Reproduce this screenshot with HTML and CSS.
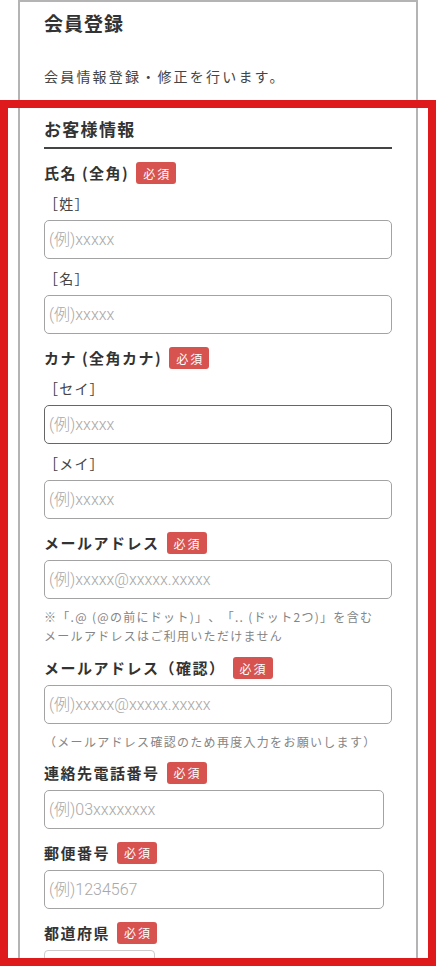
FILE: index.html
```html
<!DOCTYPE html>
<html lang="ja">
<head>
<meta charset="utf-8">
<title>会員登録</title>
<link rel="stylesheet" href="styles.css">
</head>
<body>
<div class="page">
  <h1 class="title">会員登録</h1>
  <p class="intro">会員情報登録・修正を行います。</p>

  <h2 class="section">お客様情報</h2>

  <div class="field">
    <div class="label"><span class="label-text">氏名 (全角)</span><span class="req">必須</span></div>
    <div class="sub">［姓］</div>
    <input class="input" type="text" placeholder="(例)xxxxx">
    <div class="sub">［名］</div>
    <input class="input" type="text" placeholder="(例)xxxxx">
  </div>

  <div class="field">
    <div class="label"><span class="label-text">カナ (全角カナ)</span><span class="req">必須</span></div>
    <div class="sub">［セイ］</div>
    <input class="input input-focus" type="text" placeholder="(例)xxxxx">
    <div class="sub">［メイ］</div>
    <input class="input" type="text" placeholder="(例)xxxxx">
  </div>

  <div class="field">
    <div class="label"><span class="label-text">メールアドレス</span><span class="req">必須</span></div>
    <input class="input" type="text" placeholder="(例)xxxxx@xxxxx.xxxxx">
    <p class="note">※「.@ (@の前にドット)」、「.. (ドット2つ)」を含む<br>メールアドレスはご利用いただけません</p>
  </div>

  <div class="field field-after-note">
    <div class="label"><span class="label-text">メールアドレス（確認）</span><span class="req">必須</span></div>
    <input class="input" type="text" placeholder="(例)xxxxx@xxxxx.xxxxx">
    <p class="note">（メールアドレス確認のため再度入力をお願いします）</p>
  </div>

  <div class="field field-after-note2">
    <div class="label"><span class="label-text">連絡先電話番号</span><span class="req">必須</span></div>
    <input class="input input-short" type="text" placeholder="(例)03xxxxxxxx">
  </div>

  <div class="field">
    <div class="label"><span class="label-text">郵便番号</span><span class="req">必須</span></div>
    <input class="input input-short" type="text" placeholder="(例)1234567">
  </div>

  <div class="field">
    <div class="label"><span class="label-text">都道府県</span><span class="req">必須</span></div>
    <div class="select"></div>
  </div>
</div>
<div class="highlight"></div>
</body>
</html>
```

FILE: styles.css
```css
html, body {
  margin: 0;
  padding: 0;
  background: #ffffff;
  overflow: hidden;
}

body {
  font-family: "Noto Sans CJK JP", "Noto Sans", sans-serif;
  color: #333333;
  position: relative;
  height: 966px;
  text-spacing-trim: space-all;
}

.page {
  margin: 0 18px;
  border: 2px solid #b4b4b4;
  border-bottom: none;
  padding: 8px 24px 40px;
  min-height: 1000px;
  box-sizing: border-box;
}

.title {
  margin: 0;
  font-size: 19px;
  line-height: 26px;
  font-weight: 700;
  letter-spacing: 1px;
  color: #333333;
}

.intro {
  margin: 30px 0 0;
  font-size: 14px;
  line-height: 20px;
  letter-spacing: 2.2px;
  color: #444444;
}

.section {
  margin: 31px 0 0;
  font-size: 17px;
  line-height: 24px;
  font-weight: 700;
  letter-spacing: 1.3px;
  color: #333333;
  padding-bottom: 6px;
  border-bottom: 2px solid #444444;
}

.field {
  margin-top: 13px;
  display: flex;
  flex-direction: column;
  align-items: flex-start;
}

.field-after-note {
  margin-top: 12.5px;
}

.field-after-note2 {
  margin-top: 11px;
}

.label {
  display: flex;
  align-items: center;
  gap: 7px;
  height: 22px;
  margin-bottom: 6px;
}

.label-text {
  font-size: 15px;
  font-weight: 700;
  letter-spacing: 1.5px;
  color: #333333;
  line-height: 22px;
}

.req {
  display: inline-flex;
  align-items: center;
  justify-content: center;
  width: 40px;
  height: 22px;
  background: #d75350;
  color: #ffffff;
  font-size: 12px;
  letter-spacing: 2px;
  padding-left: 2px;
  box-sizing: border-box;
  border-radius: 3px;
}

.sub {
  margin-top: 3px;
  margin-bottom: 7px;
  font-size: 14px;
  line-height: 20px;
  letter-spacing: 1.2px;
  color: #444444;
}

.input + .sub {
  margin-top: 9px;
}

.input {
  display: block;
  width: 348px;
  height: 39px;
  box-sizing: border-box;
  border: 1px solid #a3a3a3;
  border-radius: 5px;
  padding: 0 4px;
  margin: 0;
  font-family: Roboto, "Noto Sans CJK JP", sans-serif;
  font-size: 16px;
  font-weight: 300;
  color: #333333;
  background: #ffffff;
  outline: none;
}

.input::placeholder {
  color: #a8a8a8;
  font-weight: 300;
}

.input-focus {
  border-color: #666666;
}

.input-short {
  width: 340px;
}

.note {
  margin: 7.5px 0 0;
  font-size: 12px;
  line-height: 19px;
  letter-spacing: 1.3px;
  color: #858585;
}

.select {
  width: 111px;
  height: 39px;
  box-sizing: border-box;
  border: 1px solid #cccccc;
  border-radius: 4px;
  background: #ffffff;
}

.highlight {
  position: absolute;
  left: 0;
  top: 100px;
  width: 436px;
  height: 866px;
  box-sizing: border-box;
  border: 8px solid #df1a1d;
  pointer-events: none;
}
```
